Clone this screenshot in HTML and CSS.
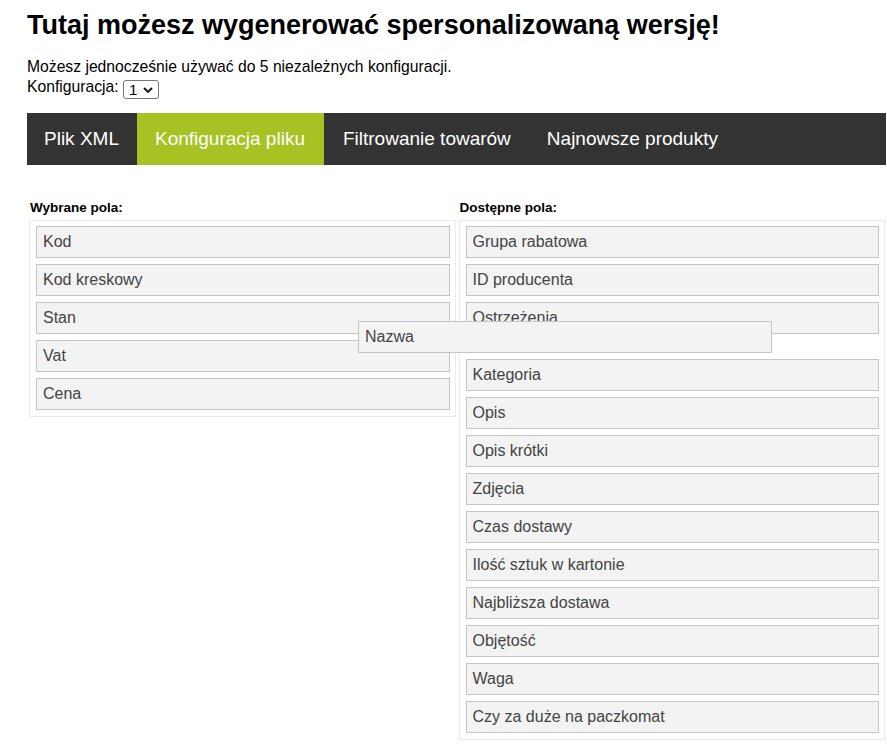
FILE: index.html
```html
<!DOCTYPE html>
<html lang="pl">
<head>
<meta charset="utf-8">
<title>Konfiguracja</title>
<link rel="stylesheet" href="styles.css">
</head>
<body>
<div class="page">
  <h1 class="title">Tutaj możesz wygenerować spersonalizowaną wersję!</h1>
  <p class="intro">Możesz jednocześnie używać do 5 niezależnych konfiguracji.<br>
    Konfiguracja: <span class="select">1 <svg class="chev" viewBox="0 0 10 6" width="10" height="6"><path d="M1 1l4 4 4-4" fill="none" stroke="#111" stroke-width="1.8"/></svg></span></p>
  <nav class="tabs">
    <a class="tab">Plik XML</a>
    <a class="tab active">Konfiguracja pliku</a>
    <a class="tab">Filtrowanie towarów</a>
    <a class="tab">Najnowsze produkty</a>
  </nav>
  <div class="columns">
    <section class="col">
      <div class="label">Wybrane pola:</div>
      <div class="box">
        <div class="item">Kod</div>
        <div class="item">Kod kreskowy</div>
        <div class="item">Stan</div>
        <div class="item">Vat</div>
        <div class="item">Cena</div>
      </div>
    </section>
    <section class="col">
      <div class="label">Dostępne pola:</div>
      <div class="box">
        <div class="item">Grupa rabatowa</div>
        <div class="item">ID producenta</div>
        <div class="item">Ostrzeżenia</div>
        <div class="placeholder"></div>
        <div class="item">Kategoria</div>
        <div class="item">Opis</div>
        <div class="item">Opis krótki</div>
        <div class="item">Zdjęcia</div>
        <div class="item">Czas dostawy</div>
        <div class="item">Ilość sztuk w kartonie</div>
        <div class="item">Najbliższa dostawa</div>
        <div class="item">Objętość</div>
        <div class="item">Waga</div>
        <div class="item">Czy za duże na paczkomat</div>
      </div>
    </section>
    <div class="item dragging">Nazwa</div>
  </div>
</div>
</body>
</html>
```

FILE: styles.css
```css
html, body {
  margin: 0;
  padding: 0;
  background: #fff;
}
body {
  font-family: "Liberation Sans", Arial, sans-serif;
  color: #000;
}
.page {
  padding: 0 1px 0 27px;
}
.title {
  font-size: 27px;
  font-weight: bold;
  margin: 0;
  padding-top: 9px;
  line-height: 32px;
}
.intro {
  font-size: 15.7px;
  line-height: 20px;
  margin: 16px 0 14px 0;
}
.select {
  display: inline-flex;
  align-items: center;
  gap: 6px;
  height: 17px;
  padding: 0 5px 0 5px;
  border: 1px solid #767676;
  border-radius: 3px;
  font-size: 15px;
  line-height: 17px;
  vertical-align: -3px;
}
.chev {
  display: block;
}
.tabs {
  display: flex;
  background: #333333;
  height: 52px;
}
.tab {
  display: flex;
  align-items: center;
  padding: 0 18px;
  color: #fff;
  font-size: 19px;
}
.tab:first-child {
  padding-left: 17px;
}
.tab.active {
  background: #a6c323;
  padding: 0 19px 0 18px;
}
.tab.active + .tab {
  padding-left: 19px;
}
.columns {
  position: relative;
  display: grid;
  grid-template-columns: 1fr 1fr;
  gap: 3px;
  margin-top: 35px;
  padding: 0 1px 0 2px;
}
.label {
  font-size: 13.5px;
  font-weight: bold;
  line-height: 15px;
  margin: 0 0 5px 1px;
}
.box {
  border: 1px solid #ececec;
  padding: 5px 5px 0 6px;
}
.item {
  box-sizing: border-box;
  height: 32px;
  margin-bottom: 6px;
  background: #f3f3f3;
  border: 1px solid #c6c6c6;
  padding: 0 6px;
  font-size: 16px;
  line-height: 30px;
  color: #444;
}
.placeholder {
  height: 13px;
  margin-bottom: 6px;
}
.dragging {
  position: absolute;
  left: 331px;
  top: 121px;
  width: 414px;
  margin: 0;
  z-index: 5;
}
```
